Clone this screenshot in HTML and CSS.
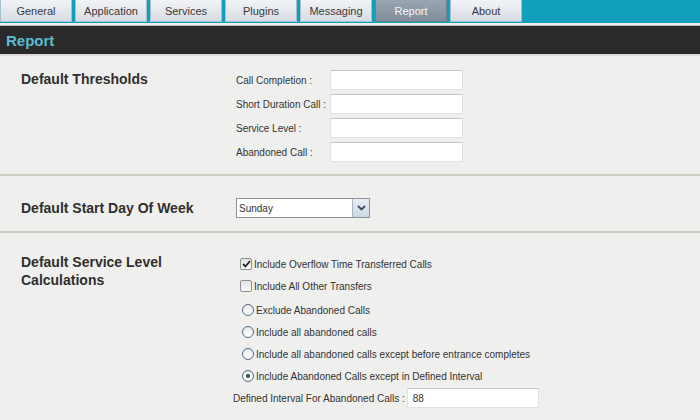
FILE: index.html
```html
<!DOCTYPE html>
<html lang="en">

    <head>
        <meta charset="UTF-8">
        <meta name="viewport" content="width=device-width, initial-scale=1.0">
        <title>Report</title>
        <link rel="stylesheet" href="styles.css">
    </head>

    <body>
        <div id="tabs">
            <div class="tab">General</div>
            <div class="tab">Application</div>
            <div class="tab">Services</div>
            <div class="tab">Plugins</div>
            <div class="tab">Messaging</div>
            <div class="tab active">Report</div>
            <div class="tab">About</div>
        </div>
        <div id="title-bar">
            <h1>Report</h1>
        </div>

        <div class="section thresholds">
            <h2>Default Thresholds</h2>
            <div class="threshold-grid">
                <label>Call Completion :</label>
                <input class="input-field" type="text" />
                <label>Short Duration Call :</label>
                <input class="input-field" type="text" />
                <label>Service Level :</label>
                <input class="input-field" type="text" />
                <label>Abandoned Call :</label>
                <input class="input-field" type="text" />
            </div>
        </div>

        <div class="section start-day">
            <h2>Default Start Day Of Week</h2>
            <div class="select-box">
                <span class="select-value">Sunday</span>
                <span class="select-btn">
                    <svg width="9" height="6" viewBox="0 0 9 6"><path d="M1 1 L4.5 4.5 L8 1" fill="none" stroke="#3d4d63" stroke-width="1.8"/></svg>
                </span>
            </div>
        </div>

        <div class="section calc">
            <h2>Default Service Level<br />Calculations</h2>
            <div class="options">
                <div class="opt check-row">
                    <span class="check on">
                        <svg width="9" height="8" viewBox="0 0 9 8"><path d="M1 4 L3.5 6.5 L8 1" fill="none" stroke="#222" stroke-width="1.8"/></svg>
                    </span>
                    Include Overflow Time Transferred Calls
                </div>
                <div class="opt check-row">
                    <span class="check"></span>
                    Include All Other Transfers
                </div>
                <div class="opt radio-row first-radio"><span class="radio"></span>Exclude Abandoned Calls</div>
                <div class="opt radio-row"><span class="radio"></span>Include all abandoned calls</div>
                <div class="opt radio-row"><span class="radio"></span>Include all abandoned calls except before entrance completes</div>
                <div class="opt radio-row"><span class="radio on"></span>Include Abandoned Calls except in Defined Interval</div>
                <div class="interval">
                    <label>Defined Interval For Abandoned Calls :</label>
                    <input class="input-field" type="text" value="88" />
                </div>
            </div>
        </div>
    </body>

</html>
```

FILE: styles.css
```css
*{
    margin:0;
    padding: 0;
    box-sizing: border-box;
    font-family: "Liberation Sans", Arial, sans-serif;
}
body{
    background-color: #efefed;
    color: #333;
    font-size: 10px;
}
#tabs{
    height: 23px;
    background-color: #119fbb;
    display: flex;
    gap: 3px;
}
.tab{
    width: 72px;
    height: 22px;
    background: linear-gradient(#f1f3f6, #d8dde4);
    border: 1px solid #a7bfcc;
    border-top: none;
    display: flex;
    justify-content: center;
    align-items: center;
    color: #3a3a3a;
    font-size: 11px;
}
.tab.active{
    background: linear-gradient(#9aa5b1, #818d9a);
    border-color: #6f7f8c;
    color: #f4f6f8;
}
#title-bar{
    margin-top: 2px;
    border-top: 1px solid #bdbdbd;
    height: 31px;
    background-color: #2b2a2a;
    border-bottom: 2px solid #dadada;
    padding-left: 6px;
    display: flex;
    align-items: center;
}
#title-bar>h1{
    color: #57bdd0;
    font-size: 15px;
    font-weight: bold;
}
.section{
    display: grid;
    grid-template-columns: 215px 1fr;
    padding-left: 21px;
    border-bottom: 2px solid #cfcfc6;
}
.section>h2{
    font-size: 14px;
    font-weight: bold;
    color: #2f2f2f;
    line-height: 18px;
}
.thresholds{
    padding-top: 14px;
    padding-bottom: 12px;
}
.threshold-grid{
    display: grid;
    grid-template-columns: 94px 133px;
    row-gap: 4px;
    align-items: center;
    white-space: nowrap;
}
.input-field{
    height: 20px;
    border: 1px solid #e2e2e2;
    border-top-color: #c4c4c4;
    background-color: white;
    padding-left: 5px;
    font-size: 10px;
    color: #333;
    outline: none;
}
.start-day{
    padding-top: 22px;
    padding-bottom: 13px;
    align-items: center;
}
.select-box{
    width: 134px;
    height: 20px;
    border: 1px solid #8d9398;
    background-color: white;
    display: flex;
    align-items: center;
    justify-content: space-between;
}
.select-value{
    padding-left: 2px;
}
.select-btn{
    width: 17px;
    height: 18px;
    background: linear-gradient(#e9eef4, #cdd7e2);
    border-left: 1px solid #a9b7c6;
    display: flex;
    justify-content: center;
    align-items: center;
}
.calc{
    padding-top: 20px;
    border-bottom: none;
}
.options{
    display: flex;
    flex-direction: column;
    white-space: nowrap;
}
.opt{
    height: 22px;
    display: flex;
    align-items: center;
}
.check-row{
    padding-left: 4px;
}
.check{
    width: 12px;
    height: 12px;
    border: 1px solid #8e8e8e;
    border-radius: 2px;
    background: linear-gradient(#e4e4e4, #fafafa);
    margin-right: 2px;
    display: flex;
    justify-content: center;
    align-items: center;
}
.radio-row{
    padding-left: 6px;
}
.first-radio{
    margin-top: 2px;
}
.radio{
    width: 12px;
    height: 12px;
    border: 1px solid #4f6c8b;
    border-radius: 50%;
    background: linear-gradient(#e6e9ed, #ffffff);
    margin-right: 2px;
    display: flex;
    justify-content: center;
    align-items: center;
}
.radio.on::after{
    content: "";
    width: 4px;
    height: 4px;
    border-radius: 50%;
    background-color: #2f4f3a;
}
.interval{
    margin-left: -3px;
    margin-top: 1px;
    display: flex;
    align-items: center;
    gap: 2px;
}
.interval>.input-field{
    width: 132px;
}
```
